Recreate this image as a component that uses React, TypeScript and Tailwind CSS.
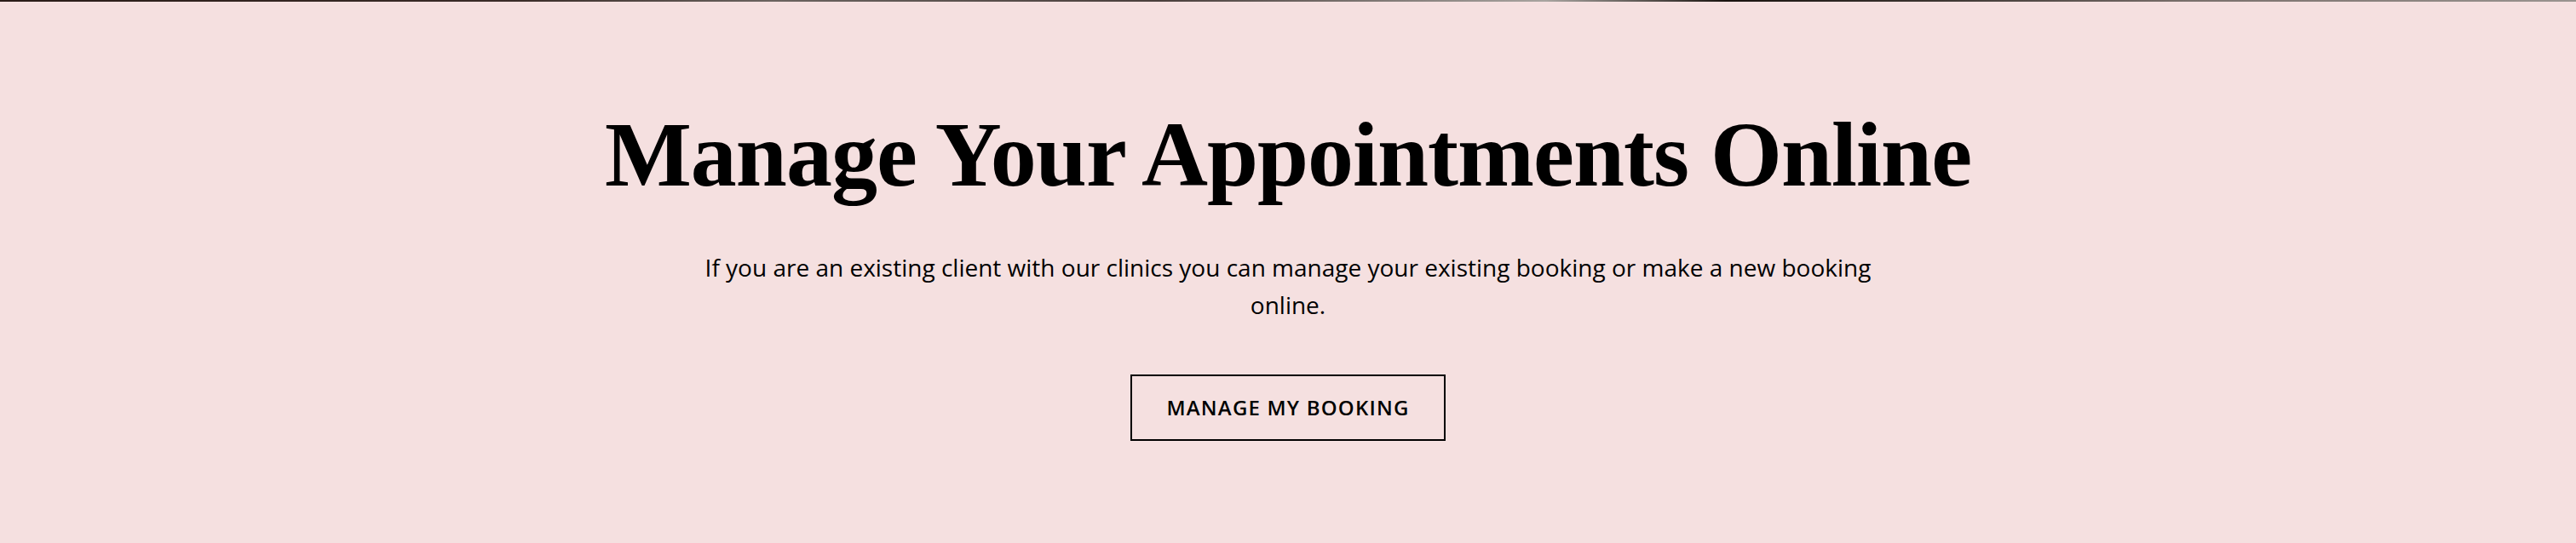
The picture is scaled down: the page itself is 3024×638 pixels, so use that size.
const App = () => {
  return (
    <div className="w-full min-h-[638px] bg-[#f5e0e0] flex flex-col">
      <div className="h-[2px] w-full bg-[linear-gradient(90deg,#2a1c18_0%,#3a2c28_20%,#6b6460_30%,#4a3f3c_45%,#a8a4a0_60%,#1a1410_67%,#3b3430_75%,#7a706c_85%,#9a9490_100%)]" />
      <div className="flex flex-col items-center pt-[126px]">
        <h1 className="font-['Liberation_Serif',serif] font-bold text-[108px] leading-[1] text-black tracking-[-1px] text-center">
          Manage Your Appointments Online
        </h1>
        <p className="mt-[56px] max-w-[1400px] text-center font-['Open_Sans',sans-serif] text-[28px] leading-[44px] text-black">
          If you are an existing client with our clinics you can manage your existing booking or make a new booking online.
        </p>
        <a
          href="#"
          className="mt-[60px] w-[370px] h-[78px] border-2 border-black flex items-center justify-center font-['Open_Sans',sans-serif] font-semibold text-[24px] tracking-[1.2px] text-black"
        >
          MANAGE MY BOOKING
        </a>
      </div>
    </div>
  );
};

export default App;
